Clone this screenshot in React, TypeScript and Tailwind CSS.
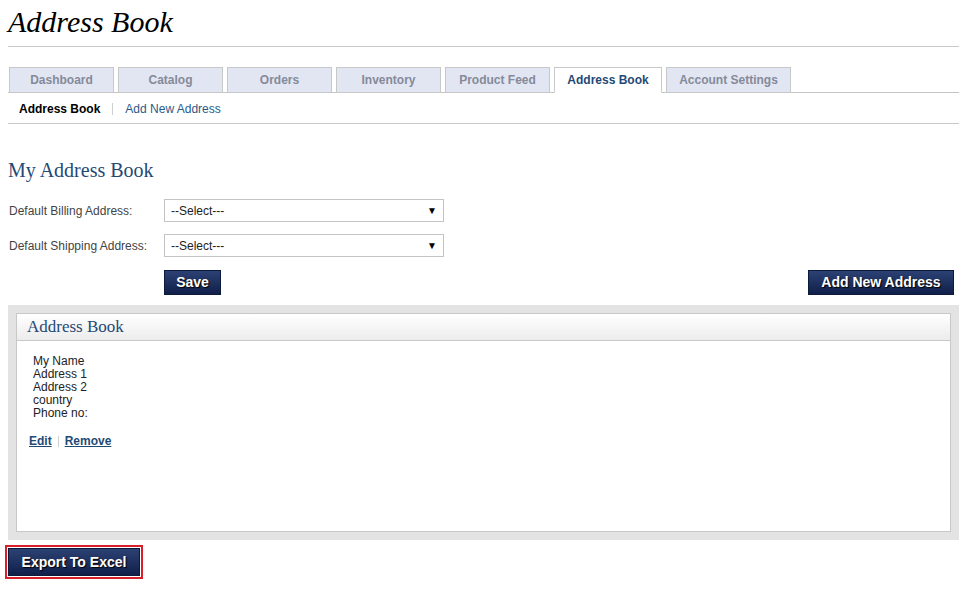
const tabs = ['Dashboard', 'Catalog', 'Orders', 'Inventory', 'Product Feed', 'Address Book', 'Account Settings'];

function NavyButton({ children, className = '' }: { children: React.ReactNode; className?: string }) {
  return (
    <button
      className={`h-[25px] border border-[#0c1a3c] bg-gradient-to-b from-[#2c4274] to-[#111f4a] px-[10px] text-[14px] font-bold text-white [text-shadow:1px_1px_1px_#000] ${className}`}
    >
      {children}
    </button>
  );
}

function Select() {
  return (
    <div className="flex h-[23px] w-[280px] items-center justify-between border border-[#c4c4c4] bg-white pl-[6px] pr-[6px] text-[12px] text-[#222]">
      <span>--Select---</span>
      <span className="text-[10px] text-black">▼</span>
    </div>
  );
}

export default function App() {
  return (
    <div className="min-h-[589px] bg-white pl-[8px] pr-[11px] pt-[5px] font-['Liberation_Sans',Arial,sans-serif] text-[12px] text-[#333]">
      {/* Titre */}
      <h1 className="h-[42px] border-b border-[#c8c8c8] font-['Liberation_Serif',serif] text-[30px] italic leading-[34px] text-black">
        Address Book
      </h1>

      {/* Onglets */}
      <div className="mt-[20px] flex gap-[4px] border-b border-[#c4c4c4] pl-px">
        {tabs.map((t) => {
          const active = t === 'Address Book';
          return (
            <div
              key={t}
              className={`-mb-px flex h-[26px] items-center justify-center border border-[#c8c8c8] text-[12px] font-bold ${
                active ? 'w-[108px] border-b-white bg-white text-[#1f4a75]' : 'bg-[#e2e6f2] text-[#858a9a]'
              } ${t === 'Account Settings' ? 'w-[125px]' : active ? '' : 'w-[105px]'}`}
            >
              {t}
            </div>
          );
        })}
      </div>

      {/* Sous-menu */}
      <div className="flex h-[31px] items-center border-b border-[#c8c8c8] pl-[11px] pt-[2px] text-[12px]">
        <span className="font-bold text-black">Address Book</span>
        <span className="mx-[12px] h-[12px] w-px bg-[#cfcfcf]" />
        <span className="text-[#2a5a8a]">Add New Address</span>
      </div>

      <h2 className="mt-[34px] font-['Liberation_Serif',serif] text-[20px] leading-[24px] text-[#1f4a75]">My Address Book</h2>

      <div className="mt-[17px] flex flex-col gap-[12px]">
        <div className="flex items-center">
          <label className="w-[156px] pl-px text-[12px] text-[#444]">Default Billing Address:</label>
          <Select />
        </div>
        <div className="flex items-center">
          <label className="w-[156px] pl-px text-[12px] text-[#444]">Default Shipping Address:</label>
          <Select />
        </div>
      </div>

      <div className="mt-[13px] flex items-center justify-between pl-[156px] pr-[5px]">
        <NavyButton className="w-[57px] px-0">Save</NavyButton>
        <NavyButton className="w-[146px] px-0">Add New Address</NavyButton>
      </div>

      {/* Panneau */}
      <div className="mt-[10px] h-[235px] bg-[#e3e3e3] p-[8px]">
        <div className="flex h-full flex-col border border-[#c8c8c8] bg-white">
          <div className="flex h-[27px] items-center border-b border-[#c8c8c8] bg-gradient-to-b from-white to-[#ececec] pl-[10px] font-['Liberation_Serif',serif] text-[17px] text-[#1f4a75]">
            Address Book
          </div>
          <div className="pl-[16px] pt-[14px] text-[12px] leading-[13px] text-[#222]">
            <div>My Name</div>
            <div>Address 1</div>
            <div>Address 2</div>
            <div>country</div>
            <div>Phone no:</div>
          </div>
          <div className="mt-[12px] flex items-center pl-[12px] text-[12px] font-bold text-[#1f4a75]">
            <span className="underline">Edit</span>
            <span className="mx-[6px] h-[11px] w-px bg-[#cfcfcf]" />
            <span className="underline">Remove</span>
          </div>
        </div>
      </div>

      {/* Export */}
      <div className="-ml-[3px] mt-[5px] inline-block border-2 border-[#d8202a] p-px">
        <NavyButton className="h-[28px] w-[132px] px-0">Export To Excel</NavyButton>
      </div>
    </div>
  );
}
